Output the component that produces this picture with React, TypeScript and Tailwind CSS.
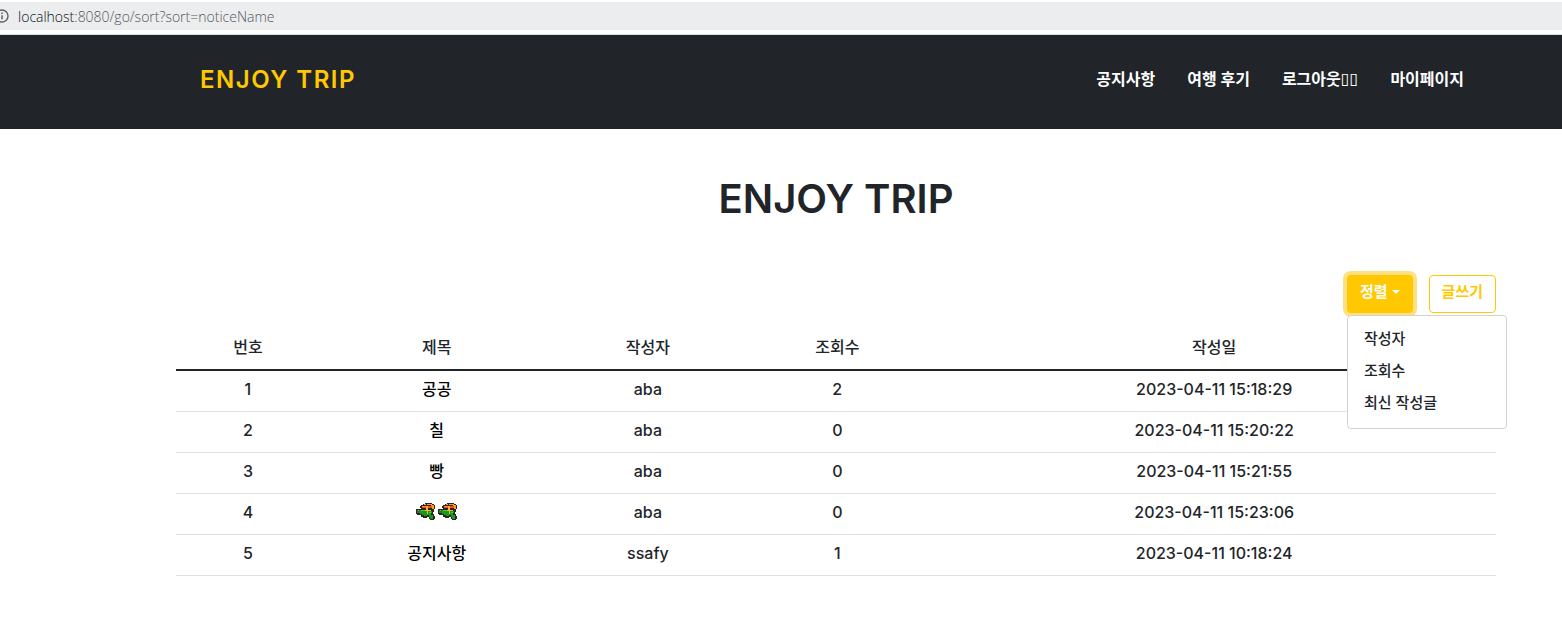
import React from "react";

const navLinks = ["공지사항", "여행 후기", "로그아웃", "마이페이지"];
const sortOptions = ["작성자", "조회수", "최신 작성글"];
const columns = [
  { label: "번호", width: "w-[10.9%]" },
  { label: "제목", width: "w-[17.7%]" },
  { label: "작성자", width: "w-[14.3%]" },
  { label: "조회수", width: "w-[14.4%]" },
  { label: "작성일", width: "w-[42.7%]" },
];
const notices = [
  { id: 1, title: "공공", author: "aba", views: 2, date: "2023-04-11 15:18:29" },
  { id: 2, title: "칠", author: "aba", views: 0, date: "2023-04-11 15:20:22" },
  { id: 3, title: "빵", author: "aba", views: 0, date: "2023-04-11 15:21:55" },
  { id: 4, title: "", author: "aba", views: 0, date: "2023-04-11 15:23:06" },
  { id: 5, title: "공지사항", author: "ssafy", views: 1, date: "2023-04-11 10:18:24" },
];

function InfoIcon() {
  return (
    <svg viewBox="0 0 14 14" className="-ml-[5px] size-[14px] shrink-0" fill="none" aria-hidden="true">
      <circle cx="7" cy="7" r="6" stroke="#5f6368" strokeWidth="1.4" />
      <path d="M7 6.2v4M7 3.6v1.4" stroke="#5f6368" strokeWidth="1.5" />
    </svg>
  );
}

function WaterGun() {
  return (
    <svg viewBox="0 0 20 18" className="h-[18px] w-[20px]" role="img" aria-label="물총">
      <path
        d="M7 1h2V0h7v1h2v1h1v4h-1v3h-1v2h1v2h1v3h-1v1h-4v-1h-1v-2h-2v1H7v-1H5v-2H1v-1H0V6h5V5H4V3h1V2h2z"
        fill="#2b2623"
      />
      <path d="M6 3h11v2H6z" fill="#ee4f1e" />
      <path d="M8 1h2v1H8zM11 1h5v1h2v4h-2V3h-1V2h-4z" fill="#ff9c24" />
      <path d="M6 3h4v1H6z" fill="#ff8055" />
      <path d="M1 7h3v3H1z" fill="#3e6b32" />
      <path d="M4 7h6v1h6v2h-1v2h2v4h-3v-2h-1v-2h-2v1H8v-1H6v-1H4z" fill="#159a20" />
      <path d="M5 7h4v1H5zM13 9h2v1h-2zM2 7h1v1H2z" fill="#46c932" />
      <path d="M10 3h2v4h3v1h-3v3h-1V8H9V7h1z" fill="#ffb326" />
    </svg>
  );
}

export default function App() {
  return (
    <div className="min-h-screen overflow-x-hidden bg-white font-['Inter','Noto_Sans_CJK_KR',sans-serif] text-[#212529]">
      <div className="border-b border-[#dadce0] bg-white pt-[2px] pb-1">
        <div className="flex h-7 items-center gap-[9px] bg-[#ebedee] font-['Open_Sans',sans-serif] text-[14px] font-light text-[#55585c]">
          <InfoIcon />
          <span>
            <span className="text-[#101114]">localhost</span>:8080/go/sort?sort=noticeName
          </span>
        </div>
      </div>

      <nav className="flex h-[94px] items-center justify-between bg-[#212529] pr-[98px] pb-1 pl-[200px]">
        <a href="#" className="text-[24px] leading-9 font-semibold tracking-[0.0625em] text-[#ffc800]">
          ENJOY TRIP
        </a>
        <ul className="flex gap-8 pb-[2px] text-[16px] leading-6 font-bold text-white">
          {navLinks.map((label) => (
            <li key={label}>
              <a href="#" className="flex items-center">
                {label}
                {label === "로그아웃" && (
                  <span className="font-['DejaVu_Sans'] text-[16px] leading-4 font-normal">▯▯</span>
                )}
              </a>
            </li>
          ))}
        </ul>
      </nav>

      <main className="pr-[66px] pl-[176px]">
        <h1 className="pt-[44px] text-center text-[40px] leading-[52px] font-semibold">ENJOY TRIP</h1>

        <div className="mt-[50px] flex justify-end gap-4 text-[16px] leading-6 font-bold">
          <div className="relative">
            <button
              type="button"
              aria-expanded="true"
              className="flex h-[38px] items-center gap-1 rounded-[4px] bg-[#ffc800] px-[13px] pb-1 text-[15px] text-white ring-4 ring-[#ffe080]"
            >
              정렬
              <span className="border-x-4 border-t-4 border-x-transparent border-t-white" />
            </button>
            <ul className="absolute top-10 left-0 w-40 rounded-[4px] border border-[#d3d3d4] bg-white pt-[7px] pb-[9px] text-[15px] font-medium">
              {sortOptions.map((label) => (
                <li key={label}>
                  <a href="#" className="block px-4 py-1">
                    {label}
                  </a>
                </li>
              ))}
            </ul>
          </div>
          <button
            type="button"
            className="h-[38px] rounded-[4px] border border-[#ffc800] px-[12px] pb-1 text-[15px] text-[#ffc800]"
          >
            글쓰기
          </button>
        </div>

        <table className="mt-[14px] w-full table-fixed border-collapse text-center text-[16px] leading-6 font-medium">
          <thead>
            <tr className="border-b-2 border-[#212529]">
              {columns.map((c) => (
                <th key={c.label} scope="col" className={`${c.width} pt-2 pb-[10px] font-medium`}>
                  {c.label}
                </th>
              ))}
            </tr>
          </thead>
          <tbody>
            {notices.map((n) => (
              <tr key={n.id} className="h-[41px] border-b border-[#dee2e6]">
                <td className="pb-1">{n.id}</td>
                <td className="pb-1">
                  <a href="#" className="flex justify-center gap-[2px] text-black">
                    {n.title || (
                      <>
                        <WaterGun />
                        <WaterGun />
                      </>
                    )}
                  </a>
                </td>
                <td className="pb-1">{n.author}</td>
                <td className="pb-1">{n.views}</td>
                <td className="pb-1">{n.date}</td>
              </tr>
            ))}
          </tbody>
        </table>
      </main>
    </div>
  );
}
